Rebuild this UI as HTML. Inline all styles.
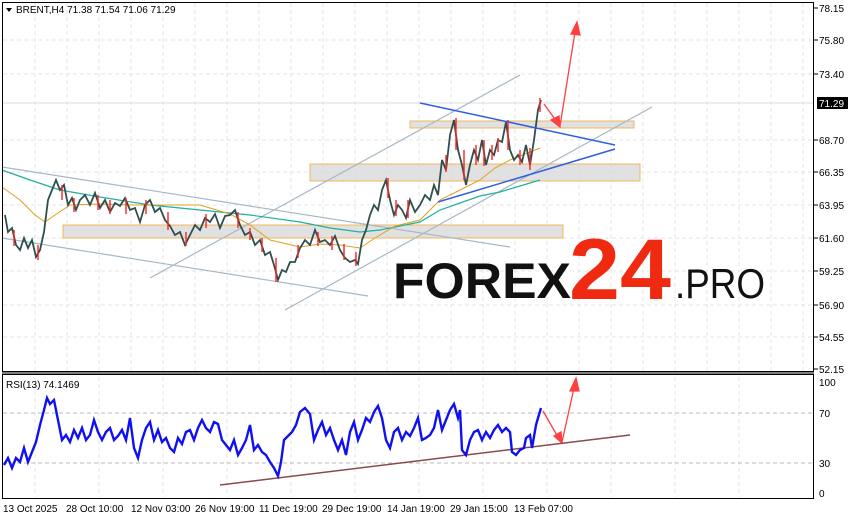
<!DOCTYPE html>
<html><head><meta charset="utf-8"><style>
body{margin:0;width:855px;height:521px;background:#fff;overflow:hidden;font-family:"Liberation Sans",sans-serif;}
svg{position:absolute;left:0;top:0}
.t{font-size:10px;fill:#000;font-family:"Liberation Sans",sans-serif}
</style></head><body>
<svg width="855" height="521" viewBox="0 0 855 521">
<g stroke="#e4e4e4" stroke-dasharray="4,3" stroke-width="1">
<line x1="35" y1="3" x2="35" y2="371"/><line x1="67" y1="3" x2="67" y2="371"/><line x1="99" y1="3" x2="99" y2="371"/><line x1="131" y1="3" x2="131" y2="371"/><line x1="163" y1="3" x2="163" y2="371"/><line x1="195" y1="3" x2="195" y2="371"/><line x1="227" y1="3" x2="227" y2="371"/><line x1="259" y1="3" x2="259" y2="371"/><line x1="291" y1="3" x2="291" y2="371"/><line x1="323" y1="3" x2="323" y2="371"/><line x1="355" y1="3" x2="355" y2="371"/><line x1="387" y1="3" x2="387" y2="371"/><line x1="419" y1="3" x2="419" y2="371"/><line x1="451" y1="3" x2="451" y2="371"/><line x1="483" y1="3" x2="483" y2="371"/><line x1="515" y1="3" x2="515" y2="371"/><line x1="547" y1="3" x2="547" y2="371"/><line x1="579" y1="3" x2="579" y2="371"/><line x1="611" y1="3" x2="611" y2="371"/><line x1="643" y1="3" x2="643" y2="371"/><line x1="675" y1="3" x2="675" y2="371"/><line x1="707" y1="3" x2="707" y2="371"/><line x1="739" y1="3" x2="739" y2="371"/><line x1="771" y1="3" x2="771" y2="371"/><line x1="803" y1="3" x2="803" y2="371"/>
<line x1="3" y1="40" x2="813" y2="40"/><line x1="3" y1="74" x2="813" y2="74"/><line x1="3" y1="140" x2="813" y2="140"/><line x1="3" y1="172" x2="813" y2="172"/><line x1="3" y1="205" x2="813" y2="205"/><line x1="3" y1="238" x2="813" y2="238"/><line x1="3" y1="271" x2="813" y2="271"/><line x1="3" y1="305" x2="813" y2="305"/><line x1="3" y1="337" x2="813" y2="337"/>
</g>
<line x1="3" y1="103" x2="813" y2="103" stroke="#ddd"/>
<g stroke="#e4e4e4" stroke-dasharray="4,3">
<line x1="35" y1="377" x2="35" y2="497"/><line x1="99" y1="377" x2="99" y2="497"/><line x1="163" y1="377" x2="163" y2="497"/><line x1="227" y1="377" x2="227" y2="497"/><line x1="291" y1="377" x2="291" y2="497"/><line x1="355" y1="377" x2="355" y2="497"/><line x1="419" y1="377" x2="419" y2="497"/><line x1="483" y1="377" x2="483" y2="497"/><line x1="547" y1="377" x2="547" y2="497"/><line x1="611" y1="377" x2="611" y2="497"/><line x1="675" y1="377" x2="675" y2="497"/><line x1="739" y1="377" x2="739" y2="497"/>
</g>
<g stroke="#bbb" stroke-dasharray="4,3"><line x1="3" y1="413" x2="813" y2="413"/><line x1="3" y1="463" x2="813" y2="463"/></g>
<g fill="#dcdcdc" fill-opacity="0.85" stroke="#f0b860" stroke-width="1">
<rect x="63" y="225" width="500" height="13"/><rect x="310" y="164" width="330" height="17"/><rect x="410" y="121" width="224" height="7"/>
</g>
<g stroke="#a6b8c6" stroke-width="1.2" fill="none">
<line x1="2" y1="167" x2="510" y2="247"/><line x1="2" y1="238" x2="368" y2="296"/>
<line x1="150" y1="278" x2="520" y2="75"/><line x1="285" y1="310" x2="652" y2="107"/>
</g>
<polyline fill="none" stroke="#20b0a0" stroke-width="1.2" points="2,170 30,180 60,190 100,197 150,205 200,210 250,215 300,222 330,228 360,232 380,230 400,226 420,222 440,210 460,203 480,196 500,192 520,186 540,180"/>
<polyline fill="none" stroke="#e0a020" stroke-width="1" points="2,187 20,200 35,215 45,222 55,215 70,205 100,204 130,205 170,205 200,205 230,214 250,225 270,240 300,247 320,244 340,245 360,248 375,238 395,226 420,220 440,200 460,190 480,180 495,168 510,160 525,154 540,148"/>
<polyline fill="none" stroke="#2f4f4f" stroke-width="1.8" points="5,215 8,232 12,228 16,245 20,250 24,238 28,248 32,240 36,257 40,250 44,232 48,200 52,190 56,180 60,190 64,185 68,205 72,198 76,210 80,200 85,195 90,205 95,193 100,208 105,200 110,212 115,203 120,206 125,198 130,210 135,208 140,222 145,205 150,200 155,212 160,208 165,220 170,226 175,235 180,232 185,245 190,235 195,225 200,230 205,218 210,222 215,214 220,228 225,216 230,215 235,210 240,225 245,235 250,232 255,245 260,240 265,255 270,252 274,265 278,280 282,270 286,272 290,262 295,262 300,248 305,240 310,245 315,230 320,242 325,240 330,245 335,236 340,250 345,258 350,262 355,260 358,264 362,240 366,230 370,215 374,205 378,210 382,190 386,180 390,200 394,215 398,205 402,210 406,218 410,200 415,212 420,205 425,195 430,200 434,185 438,195 442,160 446,170 450,135 454,120 458,150 462,165 466,185 470,165 474,150 478,160 482,140 486,165 490,150 494,155 498,140 502,142 506,122 510,150 514,160 518,155 522,162 526,145 530,165 534,140 538,110 541,100"/>
<g stroke="#ff2020" stroke-width="1.4">
<line x1="14" y1="230" x2="14" y2="246"/><line x1="38" y1="245" x2="38" y2="260"/><line x1="74" y1="198" x2="74" y2="212"/><line x1="98" y1="195" x2="98" y2="210"/><line x1="126" y1="198" x2="126" y2="214"/><line x1="168" y1="212" x2="168" y2="230"/><line x1="186" y1="232" x2="186" y2="246"/><line x1="238" y1="212" x2="238" y2="228"/><line x1="262" y1="238" x2="262" y2="252"/><line x1="276" y1="258" x2="276" y2="282"/><line x1="318" y1="232" x2="318" y2="246"/><line x1="344" y1="244" x2="344" y2="260"/><line x1="356" y1="252" x2="356" y2="266"/><line x1="388" y1="178" x2="388" y2="198"/><line x1="408" y1="200" x2="408" y2="218"/><line x1="456" y1="118" x2="456" y2="150"/><line x1="464" y1="150" x2="464" y2="180"/><line x1="484" y1="140" x2="484" y2="166"/><line x1="492" y1="145" x2="492" y2="160"/><line x1="508" y1="120" x2="508" y2="150"/><line x1="520" y1="150" x2="520" y2="165"/><line x1="530" y1="148" x2="530" y2="170"/><line x1="540" y1="98" x2="540" y2="112"/>
<line x1="62" y1="185" x2="62" y2="200"/><line x1="110" y1="200" x2="110" y2="214"/><line x1="146" y1="200" x2="146" y2="214"/><line x1="206" y1="214" x2="206" y2="228"/><line x1="250" y1="228" x2="250" y2="240"/><line x1="298" y1="245" x2="298" y2="258"/><line x1="332" y1="236" x2="332" y2="250"/><line x1="396" y1="200" x2="396" y2="216"/><line x1="446" y1="155" x2="446" y2="172"/><line x1="476" y1="145" x2="476" y2="165"/><line x1="498" y1="138" x2="498" y2="152"/>
</g>
<g stroke="#3060e0" stroke-width="1.5"><line x1="420" y1="103" x2="615" y2="145"/><line x1="438" y1="202" x2="615" y2="149"/></g>
<g stroke="#ff4040" stroke-width="1.3" fill="#ff4040">
<line x1="544" y1="104" x2="557" y2="122"/><polygon points="560,127 551,120 559,116"/>
<line x1="560" y1="126" x2="575" y2="32"/><polygon points="577,22 571,34 580,35"/>
<line x1="543" y1="411" x2="558" y2="437"/><polygon points="562,443 554,436 561,432"/>
<line x1="562" y1="442" x2="574" y2="388"/><polygon points="576,378 570,391 579,391"/>
</g>
<text x="393" y="298" font-family="Liberation Sans,sans-serif" font-weight="bold" font-size="50" fill="#111" textLength="178" lengthAdjust="spacingAndGlyphs">FOREX</text>
<text x="569" y="299" font-family="Liberation Sans,sans-serif" font-weight="bold" font-size="86" fill="#f02a10" textLength="102" lengthAdjust="spacingAndGlyphs">24</text>
<text x="675" y="298" font-family="Liberation Sans,sans-serif" font-size="42" fill="#111" textLength="90" lengthAdjust="spacingAndGlyphs">.PRO</text>
<line x1="220" y1="485" x2="630" y2="435" stroke="#8a4a4a" stroke-width="1.5"/>
<polyline fill="none" stroke="#1010f0" stroke-width="2.4" points="4,465 8,458 12,468 16,458 20,462 24,448 28,462 32,452 36,442 40,425 44,410 47,398 50,404 54,400 58,420 62,440 66,435 70,442 74,430 78,438 82,428 86,440 90,435 94,420 98,432 102,440 106,432 110,428 114,440 118,436 122,430 126,440 130,418 134,448 138,458 142,440 146,428 150,422 154,440 158,430 162,442 166,438 170,448 174,452 178,438 182,444 186,432 190,430 194,440 198,428 202,420 206,428 210,432 214,422 218,424 222,440 226,445 230,450 234,440 238,455 242,448 246,440 250,425 254,450 258,445 262,452 266,455 270,462 274,468 278,476 281,462 284,440 288,436 292,432 296,425 300,412 305,408 310,414 314,440 318,430 322,422 326,435 330,428 334,440 338,450 342,440 346,455 350,432 354,422 358,440 362,430 366,418 370,422 374,412 378,406 382,418 386,440 390,448 394,432 398,428 402,440 406,432 410,436 414,428 418,418 422,440 426,438 430,435 434,428 438,410 442,430 446,420 450,410 454,404 458,418 460,410 462,450 466,455 470,440 474,432 478,430 482,440 486,432 490,438 494,430 498,425 502,432 506,428 510,432 512,452 516,455 520,450 524,448 526,438 530,435 532,448 536,425 538,418 541,408"/>
<rect x="2.5" y="2.5" width="811" height="369" fill="none" stroke="#000"/>
<rect x="2.5" y="374.5" width="811" height="124" fill="none" stroke="#000"/>
<line x1="2" y1="373" x2="814" y2="373" stroke="#000"/>
<g stroke="#000"><line x1="814" y1="8" x2="818" y2="8"/><line x1="814" y1="40" x2="818" y2="40"/><line x1="814" y1="74" x2="818" y2="74"/><line x1="814" y1="140" x2="818" y2="140"/><line x1="814" y1="172" x2="818" y2="172"/><line x1="814" y1="205" x2="818" y2="205"/><line x1="814" y1="238" x2="818" y2="238"/><line x1="814" y1="271" x2="818" y2="271"/><line x1="814" y1="305" x2="818" y2="305"/><line x1="814" y1="337" x2="818" y2="337"/><line x1="814" y1="369" x2="818" y2="369"/></g>
<polygon points="6,8 12,8 9,12" fill="#000"/>
<text class="t" x="16" y="13">BRENT,H4  71.38 71.54 71.06 71.29</text>
<text class="t" x="6" y="388">RSI(13) 74.1469</text>
<text class="t" x="819" y="12">78.15</text><text class="t" x="819" y="44">75.80</text><text class="t" x="819" y="78">73.40</text><text class="t" x="819" y="144">68.70</text><text class="t" x="819" y="176">66.35</text><text class="t" x="819" y="209">63.95</text><text class="t" x="819" y="242">61.60</text><text class="t" x="819" y="275">59.25</text><text class="t" x="819" y="309">56.90</text><text class="t" x="819" y="341">54.55</text><text class="t" x="819" y="373">52.15</text>
<text class="t" x="819" y="386">100</text><text class="t" x="819" y="417">70</text><text class="t" x="819" y="467">30</text><text class="t" x="819" y="497">0</text>
<rect x="817" y="97" width="31" height="12" fill="#000"/>
<text x="819" y="107" font-size="10" fill="#fff" font-family="Liberation Sans,sans-serif">71.29</text>
<text class="t" x="3" y="512">13 Oct 2025</text><text class="t" x="66" y="512">28 Oct 10:00</text><text class="t" x="131" y="512">12 Nov 03:00</text><text class="t" x="195" y="512">26 Nov 19:00</text><text class="t" x="259" y="512">11 Dec 19:00</text><text class="t" x="322" y="512">29 Dec 19:00</text><text class="t" x="387" y="512">14 Jan 19:00</text><text class="t" x="450" y="512">29 Jan 15:00</text><text class="t" x="514" y="512">13 Feb 07:00</text>
</svg>
</body></html>
